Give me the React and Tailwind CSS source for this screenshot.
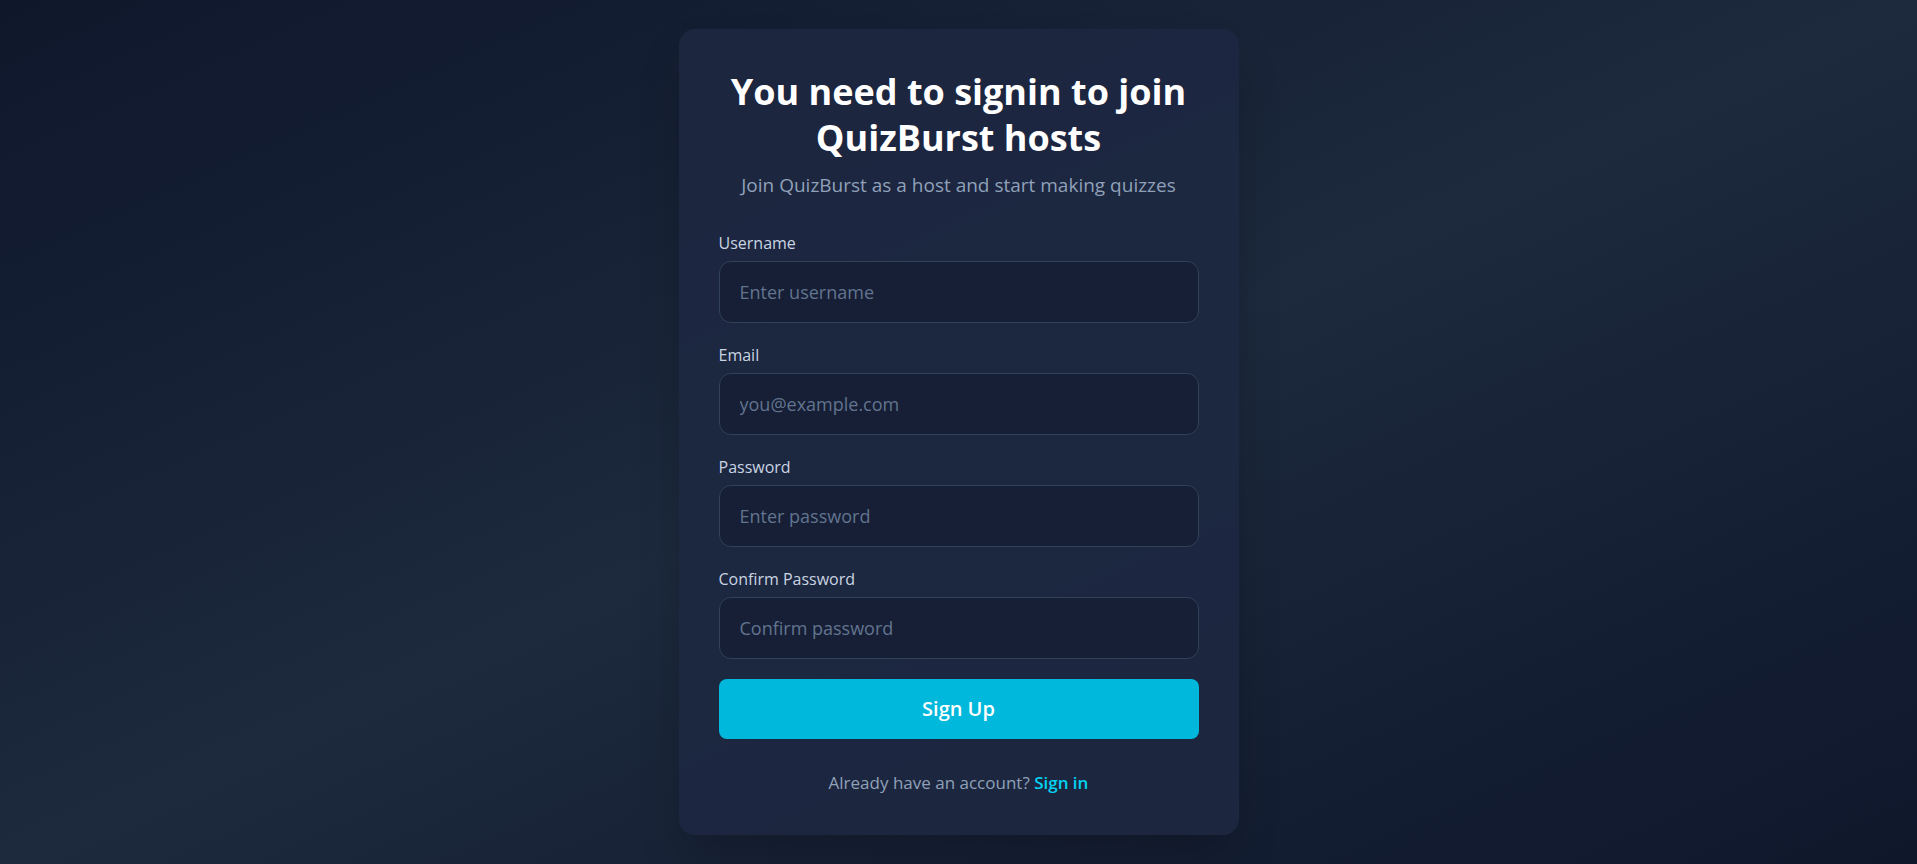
import { useState } from 'react';

const Field = ({ label, type, placeholder, value, onChange }) => (
  <div>
    <label className="block text-base leading-6 text-slate-300 mb-1.5">{label}</label>
    <input
      type={type}
      value={value}
      onChange={(e) => onChange(e.target.value)}
      placeholder={placeholder}
      className="w-full h-[62px] rounded-xl border border-slate-700 bg-slate-900/50 px-5 text-lg text-white placeholder:text-slate-500 outline-none focus:border-cyan-500 transition-colors"
    />
  </div>
);

export default function App() {
  const [username, setUsername] = useState('');
  const [email, setEmail] = useState('');
  const [password, setPassword] = useState('');
  const [confirm, setConfirm] = useState('');

  return (
    <div className="min-h-screen bg-linear-to-br from-slate-900 via-slate-800 to-slate-900 flex items-center justify-center font-['Open_Sans',sans-serif]">
      <div className="w-full max-w-[560px] bg-[#1c2740]/95 rounded-2xl p-10 shadow-2xl">
        <div className="text-center mb-8">
          <h1 className="text-[36px] leading-[46px] font-bold text-white">
            You need to signin to join QuizBurst hosts
          </h1>
          <p className="mt-2.5 text-[19px] leading-7 text-slate-400">Join QuizBurst as a host and start making quizzes</p>
        </div>

        <form onSubmit={(e) => e.preventDefault()} className="flex flex-col gap-5">
          <Field label="Username" type="text" placeholder="Enter username" value={username} onChange={setUsername} />
          <Field label="Email" type="email" placeholder="you@example.com" value={email} onChange={setEmail} />
          <Field label="Password" type="password" placeholder="Enter password" value={password} onChange={setPassword} />
          <Field label="Confirm Password" type="password" placeholder="Confirm password" value={confirm} onChange={setConfirm} />
          <button
            type="submit"
            className="w-full h-[60px] rounded-lg bg-cyan-500 hover:bg-cyan-600 text-white text-xl font-semibold transition-colors"
          >
            Sign Up
          </button>
        </form>

        <p className="mt-8 text-center text-[17px] leading-6 text-slate-400">
          Already have an account? <a href="#" className="text-cyan-400 font-semibold">Sign in</a>
        </p>
      </div>
    </div>
  );
}
